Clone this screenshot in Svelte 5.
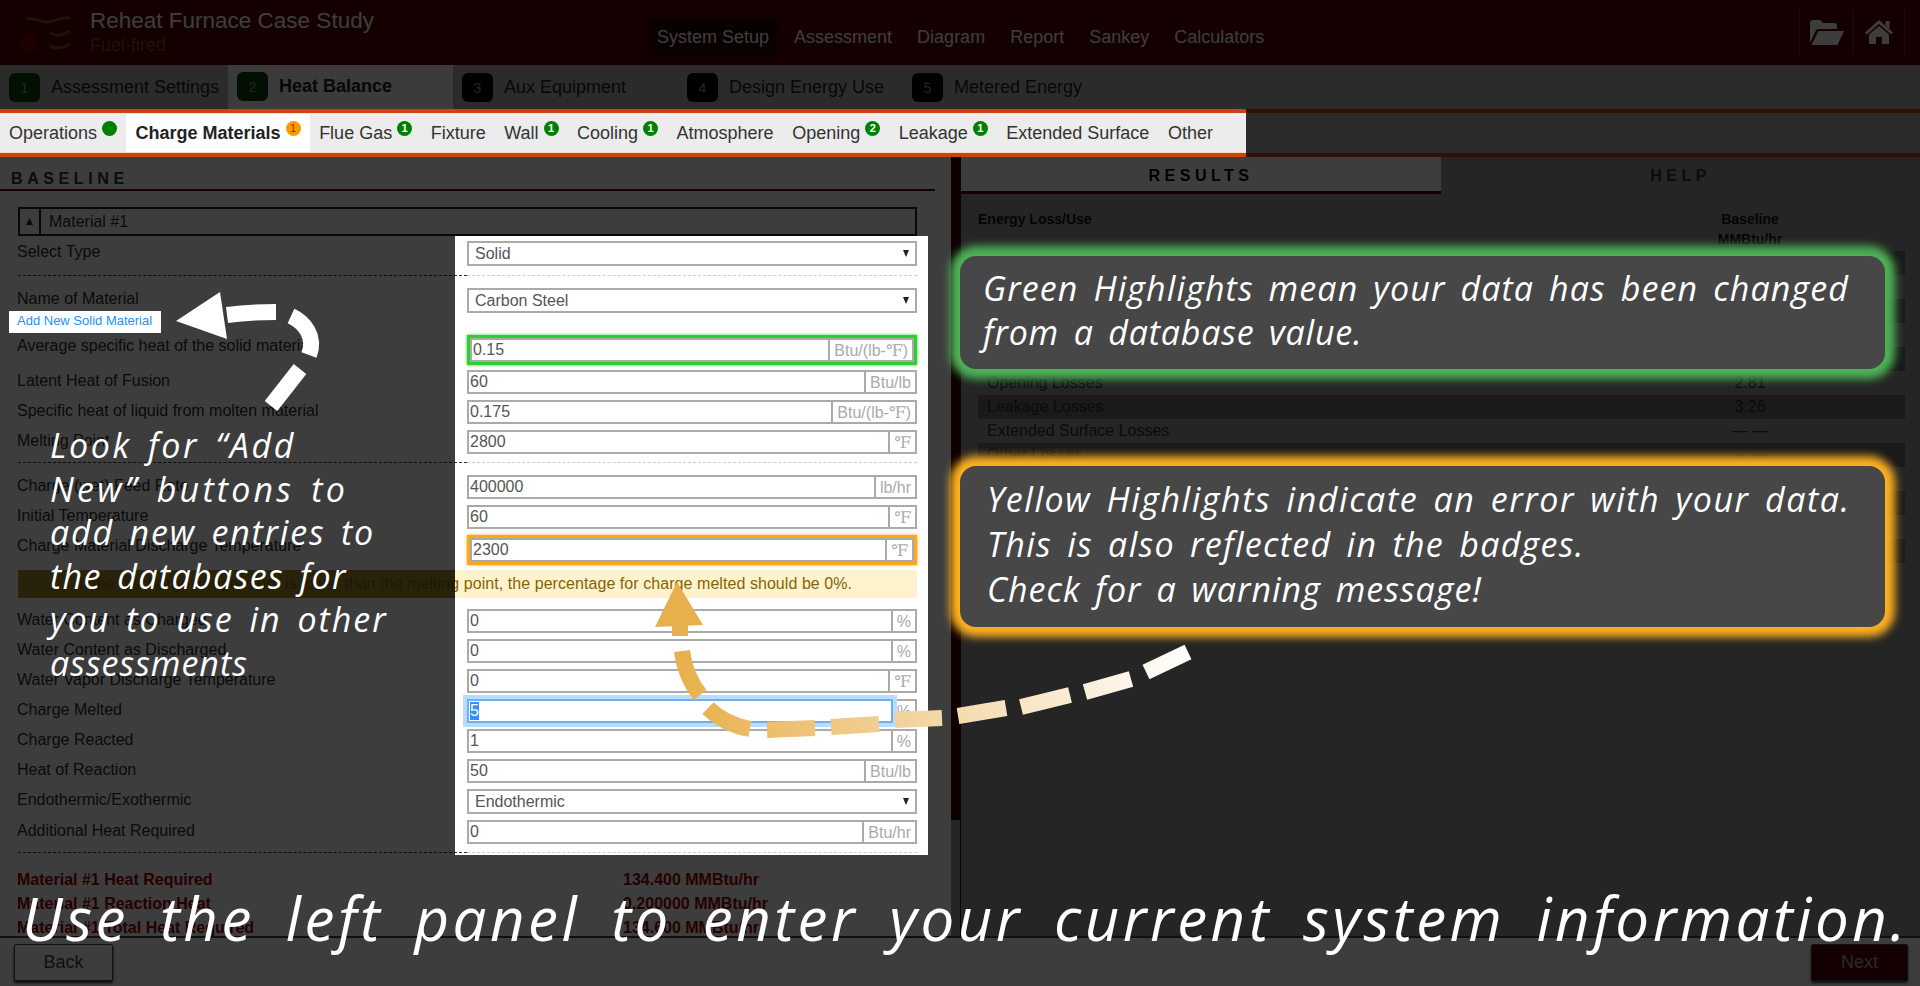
<script>
  import { onMount } from "svelte";

  const stepTabs = [
    { n: 1, label: "Assessment Settings", done: true },
    { n: 2, label: "Heat Balance", done: true, active: true },
    { n: 3, label: "Aux Equipment" },
    { n: 4, label: "Design Energy Use" },
    { n: 5, label: "Metered Energy" },
  ];

  const losses = [
    { label: "Operations", badge: "", tone: "good" },
    { label: "Charge Materials", badge: "1", tone: "warn", active: true },
    { label: "Flue Gas", badge: "1", tone: "good" },
    { label: "Fixture" },
    { label: "Wall", badge: "1", tone: "good" },
    { label: "Cooling", badge: "1", tone: "good" },
    { label: "Atmosphere" },
    { label: "Opening", badge: "2", tone: "good" },
    { label: "Leakage", badge: "1", tone: "good" },
    { label: "Extended Surface" },
    { label: "Other" },
  ];

  const fields = [
    { kind: "select", label: "Select Type", value: "Solid", after: "dash" },
    { kind: "select", label: "Name of Material", value: "Carbon Steel", add: true },
    { label: "Average specific heat of the solid material", value: "0.15", unit: "Btu/(lb-℉)", state: "changed" },
    { label: "Latent Heat of Fusion", value: "60", unit: "Btu/lb" },
    { label: "Specific heat of liquid from molten material", value: "0.175", unit: "Btu/(lb-℉)" },
    { label: "Melting Point", value: "2800", unit: "℉", after: "dash" },
    { label: "Charge (wet) Feed Rate", value: "400000", unit: "lb/hr" },
    { label: "Initial Temperature", value: "60", unit: "℉" },
    { label: "Charge Material Discharge Temperature", value: "2300", unit: "℉", state: "error", after: "warning" },
    { label: "Water Content as Charged", value: "0", unit: "%" },
    { label: "Water Content as Discharged", value: "0", unit: "%" },
    { label: "Water Vapor Discharge Temperature", value: "0", unit: "℉" },
    { label: "Charge Melted", value: "5", unit: "%", state: "focus" },
    { label: "Charge Reacted", value: "1", unit: "%" },
    { label: "Heat of Reaction", value: "50", unit: "Btu/lb" },
    { kind: "select", label: "Endothermic/Exothermic", value: "Endothermic" },
    { label: "Additional Heat Required", value: "0", unit: "Btu/hr", after: "dash" },
  ];

  const totals = [
    ["Material #1 Heat Required", "134.400 MMBtu/hr"],
    ["Material #1 Reaction Heat", "0.200000 MMBtu/hr"],
    ["Material #1 Total Heat Required", "134.600 MMBtu/hr"],
  ];

  const results = [
    ["Charge Materials", "— —"],
    ["Flue Gas Losses", "— —"],
    ["Wall Losses", "— —"],
    ["Cooling Losses", "— —"],
    ["Atmosphere Losses", "— —"],
    ["Opening Losses", "2.81"],
    ["Leakage Losses", "3.26"],
    ["Extended Surface Losses", "— —"],
    ["Other Losses", "— —"],
    ["Available Heat", "— —"],
    ["Total Input", "— —"],
    ["Exhaust Gas", "— —"],
    ["Fuel Energy", "— —"],
  ];

  // the handwriting is not a font we have, so each line gets its own tracking
  const noteLines = [
    { text: "Look for “Add", track: 2.6 },
    { text: "New” buttons to", track: 3.2 },
    { text: "add new entries to", track: 1.8 },
    { text: "the databases for", track: 1.4 },
    { text: "you to use in other", track: 2 },
    { text: "assessments", track: 1 },
  ];
  const greenLines = [
    { text: "Green Highlights mean your data has been changed", track: 1.1 },
    { text: "from a database value.", track: 0.8 },
  ];
  const amberLines = [
    { text: "Yellow Highlights indicate an error with your data.", track: 1.55 },
    { text: "This is also reflected in the badges.", track: 1.3 },
    { text: "Check for a warning message!", track: 1 },
  ];

  let focused;

  onMount(() => {
    focused?.focus();
    focused?.select();
  });
</script>

<div class="page">
  <header class="topbar">
    <div class="brand">
      <svg class="logo" viewBox="0 0 52 40" width="52" height="40" aria-hidden="true">
        <path d="M0 30c0-5 5-6 8-10 5 1 10 5 10 10 0 6-4 9-9 9s-9-3-9-9z" fill="#7c0000" />
        <g fill="none" stroke="#6e5718" stroke-width="3">
          <path d="M6 6c8-3 14 4 22 3s12-6 22-4" />
          <path d="M30 20c5 3 12 3 20-2" />
          <path d="M30 33c5 3 12 3 20-2" />
        </g>
      </svg>
      <div>
        <div class="title">Reheat Furnace Case Study</div>
        <div class="subtitle">Fuel-fired</div>
      </div>
    </div>
    <nav class="views">
      <span class="view current">System Setup</span>
      <span class="view">Assessment</span>
      <span class="view">Diagram</span>
      <span class="view">Report</span>
      <span class="view">Sankey</span>
      <span class="view">Calculators</span>
    </nav>
    <div class="tools">
      <span class="tool wide">
        <svg viewBox="0 0 34 25" width="34" height="25" aria-hidden="true">
          <path d="M0 3a3 3 0 0 1 3-3h7l3 3h11a3 3 0 0 1 3 3v3H9a4 4 0 0 0-3.600 2.400L0 23z" />
          <path d="M8.500 11H34l-6.500 14H1.500z" />
        </svg>
      </span>
      <span class="tool">
        <svg viewBox="0 0 28 24" width="28" height="24" aria-hidden="true">
          <path d="M14 0l14 12.500-1.800 2L14 4 1.800 14.500 0 12.500z" />
          <path d="M20.500 1h4v8l-4-3.500z" />
          <path d="M14 6l10 8.500V24h-7v-7h-6v7H4v-9.500z" />
        </svg>
      </span>
    </div>
  </header>

  <div class="steps">
    {#each stepTabs as tab}
      <div class="step" class:active={tab.active}>
        <span class="num" class:done={tab.done}>{tab.n}</span>
        <span>{tab.label}</span>
      </div>
    {/each}
  </div>

  <div class="lossbar">
    <div class="losses">
      {#each losses as item}
        <div class="loss" class:active={item.active}>
          <span>{item.label}</span>
          {#if item.tone}
            <span class="badge {item.tone}">{item.badge}</span>
          {/if}
        </div>
      {/each}
    </div>
  </div>

  <main class="main">
    <section class="left">
      <h2 class="baseline">BASELINE</h2>
      <div class="material">
        <span class="toggle">▲</span>
        <span>Material #1</span>
      </div>

      <div class="form">
        {#each fields as field}
          <div class="row" class:compact={field.add}>
            <div class="name">
              <div class="label">{field.label}</div>
              {#if field.add}
                <div class="add-new">Add New Solid Material</div>
              {/if}
            </div>
            {#if field.kind === "select"}
              <div class="select">
                <select><option>{field.value}</option></select>
              </div>
            {:else if field.state === "focus"}
              <div class="group is-focus">
                <input bind:this={focused} value={field.value} />
                <span class="unit">{field.unit}</span>
              </div>
            {:else}
              <div class="group" class:changed={field.state === "changed"} class:error={field.state === "error"}>
                <input value={field.value} />
                <span class="unit">{field.unit}</span>
              </div>
            {/if}
          </div>
          {#if field.after === "dash"}
            <div class="dash"><span></span><span></span></div>
          {:else if field.after === "warning"}
            <div class="warning">If the discharge temperature is lower than the melting point, the percentage for charge melted should be 0%.</div>
          {/if}
        {/each}
      </div>

      <div class="totals">
        {#each totals as total}
          <div class="total"><span>{total[0]}</span><span>{total[1]}</span></div>
        {/each}
      </div>
    </section>

    <div class="scroll"><div class="thumb"></div></div>

    <section class="right">
      <div class="right-tabs">
        <div class="right-tab current">RESULTS</div>
        <div class="right-tab">HELP</div>
      </div>
      <div class="table">
        <div class="thead">
          <span>Energy Loss/Use</span>
          <span class="col">Baseline<br />MMBtu/hr</span>
        </div>
        {#each results as result}
          <div class="trow"><span>{result[0]}</span><span class="col">{result[1]}</span></div>
        {/each}
      </div>
    </section>
  </main>

  <footer class="footer">
    <button class="back">Back</button>
    <button class="next">Next</button>
  </footer>

  <div class="dim"></div>

  <svg class="arrows" viewBox="0 0 1920 986" width="1920" height="986" aria-hidden="true">
    <defs>
      <linearGradient id="fade" gradientUnits="userSpaceOnUse" x1="1190" y1="0" x2="680" y2="0">
        <stop offset="0" stop-color="#ffffff" />
        <stop offset="1" stop-color="#e8b04c" />
      </linearGradient>
    </defs>
    <g fill="none" stroke="#fff" stroke-width="16">
      <path d="M227 315Q250 312 276 312" />
      <path d="M291 316C304 322 316 336 309 355" />
      <path d="M300 369L271 406" />
    </g>
    <path d="M176 321L220 292L227 339Z" fill="#fff" />
    <g fill="none" stroke="url(#fade)" stroke-width="16">
      <path d="M680 624V636" />
      <path d="M682 651C684 668 690 682 700 695" />
      <path d="M708 708C720 720 734 726 750 729" />
      <path d="M767 730L815 728" />
      <path d="M831 727L879 724" />
      <path d="M895 720L942 718" />
      <path d="M958 716L1006 708" />
      <path d="M1021 707L1070 695" />
      <path d="M1085 692L1131 679" />
      <path d="M1146 672L1188 652" />
    </g>
    <path d="M677 582L655 627L703 625Z" fill="#e8b04c" />
  </svg>

  <p class="hand left-note">
    {#each noteLines as line}
      <span style="letter-spacing: {line.track}px">{line.text}</span>
    {/each}
  </p>

  <div class="callout green">
    <p class="hand">
      {#each greenLines as line}
        <span style="letter-spacing: {line.track}px">{line.text}</span>
      {/each}
    </p>
  </div>
  <div class="callout amber">
    <p class="hand">
      {#each amberLines as line}
        <span style="letter-spacing: {line.track}px">{line.text}</span>
      {/each}
    </p>
  </div>

  <p class="hand banner">Use the left panel to enter your current system information.</p>
</div>

<style>
  :global(body) {
    margin: 0;
    overflow: hidden;
    background: #fff;
  }

  .page {
    position: relative;
    width: 1920px;
    height: 986px;
    overflow: hidden;
    display: flex;
    flex-direction: column;
    font-family: "Liberation Sans", Arial, sans-serif;
    font-size: 16px;
    color: #2e2e2e;
  }

  /* header */
  .topbar {
    height: 65px;
    flex: none;
    display: flex;
    align-items: center;
    background: #560000;
    color: #fff;
  }

  .brand {
    width: 649px;
    display: flex;
    align-items: center;
    gap: 18px;
    padding-left: 20px;
    box-sizing: border-box;
  }

  .title {
    font-size: 22.500px;
    line-height: 26px;
    margin-top: -2px;
  }

  .subtitle {
    font-size: 18px;
    line-height: 22px;
    color: #6e5718;
  }

  .views {
    display: flex;
    gap: 9px;
    font-size: 18px;
    margin-top: 9px;
  }

  .view {
    padding: 0 8px;
    line-height: 36px;
    border-radius: 5px;
  }

  .view.current {
    background: #280000;
  }

  .tools {
    margin-left: auto;
    margin-right: 15px;
    display: flex;
    margin-top: -1px;
    border-right: 1px solid #7a2a2a;
  }

  .tool {
    height: 46px;
    display: flex;
    align-items: center;
    justify-content: center;
    border-left: 1px solid #7a2a2a;
    width: 50px;
    fill: #fff;
  }

  .tool.wide {
    width: 53px;
  }

  /* steps */
  .steps {
    height: 44px;
    flex: none;
    display: flex;
    align-items: center;
    background: #b4b4b4;
    color: #222;
    font-size: 18px;
  }

  .step {
    width: 225px;
    box-sizing: border-box;
    height: 44px;
    padding: 1px 0 0 9px;
    display: flex;
    align-items: center;
    gap: 11px;
  }

  .step:first-child {
    width: 228px;
  }

  .step.active {
    background: #f4f4f4;
    font-weight: bold;
    border-bottom: 2px solid #fff;
  }

  .num {
    width: 31px;
    height: 29px;
    border-radius: 6px;
    background: #000;
    color: #999;
    font-weight: normal;
    font-size: 14px;
    display: flex;
    align-items: center;
    justify-content: center;
  }

  .num.done {
    background: #0a4010;
  }

  /* loss tabs */
  .lossbar {
    height: 48px;
    flex: none;
    box-sizing: border-box;
    border-top: 4px solid #c8460c;
    border-bottom: 4px solid #c8460c;
    background: #b4b4b4;
  }

  .losses {
    width: 1246px;
    height: 40px;
    display: flex;
    padding-top: 1px;
    background: #ececec;
    border-bottom: 1px solid #f8d8c8;
    box-sizing: border-box;
    color: #333;
    font-size: 18px;
  }

  .loss {
    display: flex;
    align-items: center;
    gap: 5px;
    padding: 0 9.250px;
  }

  .loss:first-child {
    padding-left: 9px;
  }

  .loss.active {
    background: #fff;
    font-weight: bold;
    color: #222;
  }

  .badge {
    width: 15px;
    height: 15px;
    border-radius: 50%;
    margin-bottom: 9px;
    font-size: 11px;
    font-weight: bold;
    line-height: 15px;
    text-align: center;
  }

  .badge.good {
    background: #008000;
    color: #fff;
  }

  .badge.warn {
    background: #ff9800;
    color: #7a3a00;
    font-weight: normal;
  }

  /* main */
  .main {
    flex: 1;
    min-height: 0;
    display: flex;
  }

  .left {
    width: 951px;
    flex: none;
    overflow: hidden;
    background: #fff;
  }

  .baseline {
    width: 935px;
    box-sizing: border-box;
    margin: 0;
    padding: 13px 0 0 11px;
    height: 34px;
    line-height: 18px;
    font-size: 16px;
    font-weight: bold;
    letter-spacing: 4.600px;
    border-bottom: 2px solid #500000;
    color: #333;
  }

  .material {
    margin: 16px 0 0 18px;
    width: 899px;
    height: 29px;
    box-sizing: border-box;
    border: 2px solid #222;
    display: flex;
    align-items: center;
    gap: 8px;
  }

  .toggle {
    width: 19px;
    height: 25px;
    border-right: 2px solid #222;
    font-size: 12px;
    line-height: 25px;
    text-align: center;
  }

  .form {
    padding: 5px 0 0 17px;
    width: 900px;
  }

  .row {
    display: grid;
    grid-template-columns: 450px 450px;
    margin-bottom: 6px;
  }

  .row:first-child {
    margin-bottom: 7px;
  }

  .row.compact {
    margin-bottom: 2px;
  }

  .label {
    line-height: 22px;
    white-space: nowrap;
  }

  .add-new {
    margin-top: 1px;
    height: 22px;
    line-height: 20px;
    font-size: 13px;
    color: #1e8fff;
  }

  .group,
  .select {
    position: relative;
    height: 24px;
    box-sizing: border-box;
    border: 2px solid #aaa;
    background: #fff;
    display: flex;
    color: #555;
  }

  .select {
    height: 25px;
  }

  .select select {
    appearance: none;
    flex: 1;
    width: 100%;
    border: 0;
    outline: 0;
    background: #fff;
    padding: 0 0 0 6px;
    font: inherit;
    color: #555;
  }

  .select::after {
    content: "";
    position: absolute;
    right: 6px;
    top: 7px;
    border: 3.500px solid transparent;
    border-top: 7px solid #222;
    border-bottom: 0;
  }

  .group input {
    flex: 1;
    min-width: 0;
    border: 0;
    outline: 0;
    padding: 0 1px;
    background: #fff;
    font: inherit;
    color: #555;
  }

  .group input::selection {
    background: #3390ff;
    color: #fff;
  }

  .unit {
    flex: none;
    padding: 0 4px;
    border-left: 2px solid #aaa;
    background: #fff;
    color: #aaa;
    line-height: 22px;
    font-family: "Liberation Sans", "DejaVu Serif", serif;
  }

  .group.changed,
  .group.error {
    margin: 3px;
  }

  .group.changed {
    box-shadow: 0 0 0 3px #33cc33, 0 0 3px 3px #33cc33;
  }

  .group.error {
    box-shadow: 0 0 0 3px #ffa51f, 0 0 3px 3px #ffa51f;
  }

  .row:has(.changed),
  .row:has(.error) {
    margin-bottom: 5px;
  }

  .group.is-focus input {
    position: relative;
    margin: -2px 0 -2px -2px;
    border: 2px solid #6ab0f3;
    box-shadow: 0 0 0 4px #b8dcff;
  }

  .group.is-focus .unit {
    border-left: 0;
  }

  .dash {
    display: grid;
    grid-template-columns: 449px 450px;
    margin: 0 0 12px 1px;
    padding-top: 2px;
  }

  .dash span:first-child {
    border-top: 1px dashed #2e2e2e;
  }

  .dash span:last-child {
    border-top: 1px dashed #ccc;
  }

  .warning {
    margin: 0 0 11px 1px;
    width: 899px;
    height: 28px;
    box-sizing: border-box;
    padding-right: 4px;
    line-height: 28px;
    letter-spacing: 0.060px;
    text-align: center;
    white-space: nowrap;
    color: #856404;
    background: linear-gradient(to right, #a89030 437px, #fff3cd 437px);
  }

  .totals {
    padding: 3px 0 0 17px;
    color: #a00000;
    font-weight: bold;
  }

  .total {
    display: grid;
    grid-template-columns: 606px 1fr;
    line-height: 24px;
  }

  .scroll {
    width: 9px;
    flex: none;
    background: #999;
  }

  .thumb {
    height: 663px;
    background: #380000;
  }

  .right {
    flex: 1;
    background: #999;
    border-left: 1px solid #500000;
  }

  .right-tabs {
    display: flex;
    height: 37px;
    font-weight: bold;
    letter-spacing: 4.500px;
    text-align: center;
    line-height: 38px;
    color: #333;
  }

  .right-tab {
    width: 479px;
  }

  .right-tab.current {
    width: 480px;
    background: #fff;
    color: #000;
    border-bottom: 3px solid #500000;
  }

  .table {
    padding: 15px 15px 0 17px;
    color: #2e2e2e;
  }

  .thead {
    display: grid;
    grid-template-columns: 1fr 172px;
    font-size: 14px;
    font-weight: bold;
    line-height: 20px;
    height: 42px;
    color: #111;
  }

  .trow {
    display: grid;
    grid-template-columns: 1fr 172px;
    height: 24px;
    line-height: 24px;
    padding-left: 9px;
  }

  .trow:nth-child(even) {
    background: #6e6e6e;
  }

  .col {
    margin-left: -33px;
    width: 100px;
    text-align: center;
  }

  .footer {
    height: 50px;
    flex: none;
    box-sizing: border-box;
    border-top: 2px solid #444;
    background: #fff;
    display: flex;
    align-items: flex-start;
    justify-content: space-between;
    padding: 6px 12px 0 14px;
  }

  .footer button {
    width: 99px;
    height: 37px;
    border: 1px solid #444;
    border-radius: 2px;
    font: inherit;
    font-size: 18px;
    box-shadow: 0 2px 3px #333;
  }

  .back {
    background: #fff;
    color: #444;
  }

  .footer .next {
    width: 97px;
    background: #560000;
    color: #aaa;
  }

  /* tutorial layer */
  .dim {
    position: absolute;
    inset: 0;
    background: rgba(0, 0, 0, 0.76);
    clip-path: path(evenodd, "M0 0H1920V986H0Z M0 109H1246V157H0Z M455 236H928V855H455Z M9 311H161V333H9Z");
  }

  .arrows {
    position: absolute;
    left: 0;
    top: 0;
    pointer-events: none;
  }

  .hand {
    margin: 0;
    font-family: "Open Sans", sans-serif;
    font-style: italic;
    font-weight: 500;
    color: #fff;
    white-space: nowrap;
  }

  .hand span {
    display: block;
  }

  .left-note {
    position: absolute;
    left: 50px;
    top: 424px;
    font-size: 34px;
    line-height: 43.500px;
    word-spacing: 5px;
  }

  .callout {
    position: absolute;
    left: 960px;
    width: 925px;
    box-sizing: border-box;
    background: #474747;
    border-radius: 16px;
  }

  .callout .hand {
    font-size: 34px;
    word-spacing: 5px;
  }

  .green {
    top: 256px;
    height: 113px;
    padding: 10px 0 0 23px;
    box-shadow: 0 0 8px 10px #4fb257;
  }

  .green .hand {
    line-height: 44px;
  }

  .amber {
    top: 466px;
    height: 161px;
    padding: 11px 0 0 27px;
    box-shadow: 0 0 8px 10px #fdb021;
  }

  .amber .hand {
    line-height: 45px;
  }

  .banner {
    position: absolute;
    left: 22px;
    top: 878px;
    font-size: 60px;
    line-height: 80px;
    letter-spacing: 3.500px;
    word-spacing: 12px;
  }
</style>
